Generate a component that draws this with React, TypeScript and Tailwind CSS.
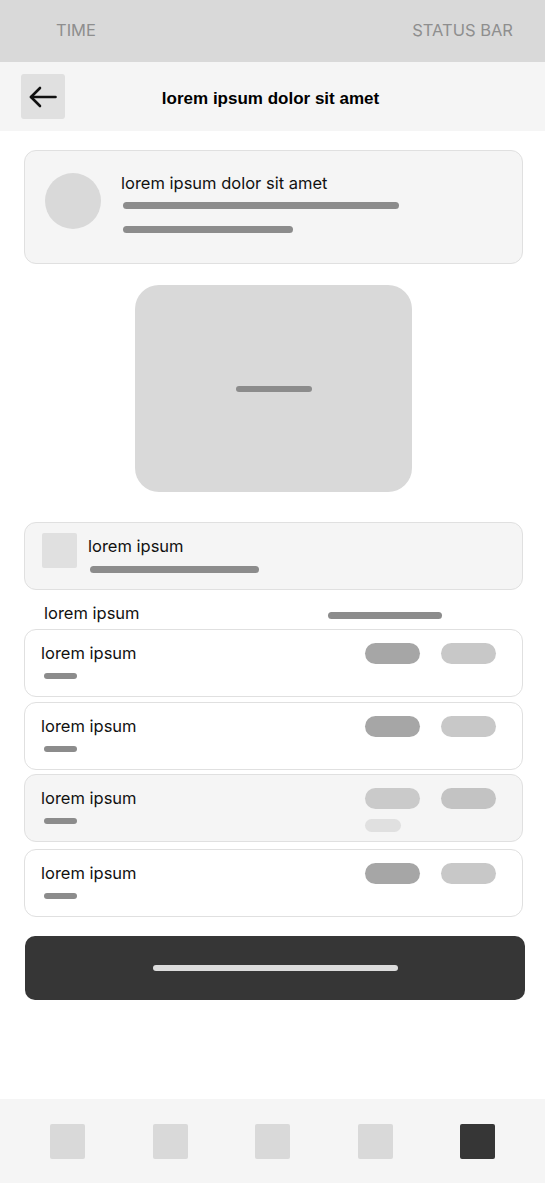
const inter = { fontFamily: "Inter, 'Noto Sans', sans-serif" };

const StatusBar = () => (
  <div className="h-[62px] bg-[#d9d9d9] flex items-center justify-between pl-[56px] pr-[32px] pb-[2px] text-[16.5px] text-[#8e8e8e]">
    <span>TIME</span>
    <span>STATUS BAR</span>
  </div>
);

const Header = () => (
  <div className="h-[69px] bg-[#f5f5f5] flex items-center pl-[21px] relative">
    <button className="w-[44px] h-[45px] bg-[#e0e0e0] rounded-[3px] flex items-center justify-center">
      <svg width="28" height="22" viewBox="0 0 28 22" fill="none" stroke="#111" strokeWidth="2.6" strokeLinecap="round" strokeLinejoin="round">
        <path d="M26.5 11H2" />
        <path d="M11 2L2 11l9 9" />
      </svg>
    </button>
    <div
      className="absolute inset-x-0 pr-[4px] text-center text-[17px] leading-[20px] font-bold text-black pointer-events-none top-[27px]"
      style={{ fontFamily: "'Liberation Sans', Arial, sans-serif" }}
    >
      lorem ipsum dolor sit amet
    </div>
  </div>
);

const Bar = ({ className }: { className: string }) => <div className={`rounded-full ${className}`} />;

type Row = { pills: [string, string]; bg: string; extra?: boolean; mt: string };

const rows: Row[] = [
  { pills: ["bg-[#a6a6a6]", "bg-[#c8c8c8]"], bg: "bg-white", mt: "mt-[6px]" },
  { pills: ["bg-[#a6a6a6]", "bg-[#c8c8c8]"], bg: "bg-white", mt: "mt-[5px]" },
  { pills: ["bg-[#cacaca]", "bg-[#c3c3c3]"], bg: "bg-[#f5f5f5]", extra: true, mt: "mt-[4px]" },
  { pills: ["bg-[#a6a6a6]", "bg-[#c8c8c8]"], bg: "bg-white", mt: "mt-[7px]" },
];

const ListRow = ({ row }: { row: Row }) => (
  <div className={`${row.mt} ${row.bg} h-[68px] rounded-[12px] border-[1.5px] border-[#e0e0e0] flex justify-between pl-[16px] pr-[26px] pt-[13px]`}>
    <div>
      <div className="text-[16.5px] leading-[20px] text-[#111]">lorem ipsum</div>
      <Bar className="mt-[10px] ml-[3px] w-[33px] h-[6px] bg-[#8c8c8c]" />
    </div>
    <div className="flex flex-col">
      <div className="flex gap-[21px]">
        <Bar className={`w-[55px] h-[21px] ${row.pills[0]}`} />
        <Bar className={`w-[55px] h-[21px] ${row.pills[1]}`} />
      </div>
      {row.extra && <Bar className="mt-[10px] w-[36px] h-[13px] bg-[#e0e0e0]" />}
    </div>
  </div>
);

export default function App() {
  return (
    <div className="min-h-screen flex flex-col bg-white" style={inter}>
      <StatusBar />
      <Header />
      <div className="pl-6 pr-[22px] pt-[19px]">
        <div className="h-[114px] bg-[#f5f5f5] rounded-[12px] border-[1.5px] border-[#e0e0e0] flex items-start pl-[20px] pt-[22px]">
          <div className="w-[56px] h-[56px] rounded-full bg-[#d9d9d9] shrink-0" />
          <div className="ml-[20px]">
            <div className="text-[16.5px] leading-[20px] text-[#111]">lorem ipsum dolor sit amet</div>
            <Bar className="mt-[9px] ml-[2px] w-[276px] h-[7px] bg-[#8c8c8c]" />
            <Bar className="mt-[17px] ml-[2px] w-[170px] h-[7px] bg-[#8c8c8c]" />
          </div>
        </div>

        <div className="mt-[21px] mx-auto w-[277px] h-[207px] rounded-[24px] bg-[#d9d9d9] flex items-center justify-center">
          <Bar className="w-[76px] h-[6px] bg-[#8c8c8c]" />
        </div>

        <div className="mt-[30px] h-[68px] bg-[#f5f5f5] rounded-[12px] border-[1.5px] border-[#e0e0e0] flex items-start pl-[17px] pt-[10px]">
          <div className="w-[35px] h-[35px] rounded-[2px] bg-[#e0e0e0] shrink-0" />
          <div className="ml-[11px] mt-[3px]">
            <div className="text-[16.5px] leading-[20px] text-[#111]">lorem ipsum</div>
            <Bar className="mt-[10px] ml-[2px] w-[169px] h-[7px] bg-[#8c8c8c]" />
          </div>
        </div>

        <div className="mt-[13px] flex items-start justify-between pl-[20px] pr-[81px]">
          <div className="text-[16.5px] leading-[20px] text-[#111]">lorem ipsum</div>
          <Bar className="mt-[9px] w-[114px] h-[7px] bg-[#8c8c8c]" />
        </div>

        {rows.map((r, i) => (
          <ListRow key={i} row={r} />
        ))}

        <button className="mt-[19px] ml-[1px] w-[500px] h-[64px] rounded-[10px] bg-[#363636] flex items-center justify-center">
          <Bar className="w-[245px] h-[6px] bg-[#dcdcdc]" />
        </button>
      </div>

      <div className="mt-auto h-[84px] bg-[#f5f5f5] flex items-center justify-between px-[50px]">
        <div className="w-[35px] h-[35px] rounded-[2px] bg-[#d9d9d9]" />
        <div className="w-[35px] h-[35px] rounded-[2px] bg-[#d9d9d9]" />
        <div className="w-[35px] h-[35px] rounded-[2px] bg-[#d9d9d9]" />
        <div className="w-[35px] h-[35px] rounded-[2px] bg-[#d9d9d9]" />
        <div className="w-[35px] h-[35px] rounded-[2px] bg-[#363636]" />
      </div>
    </div>
  );
}
